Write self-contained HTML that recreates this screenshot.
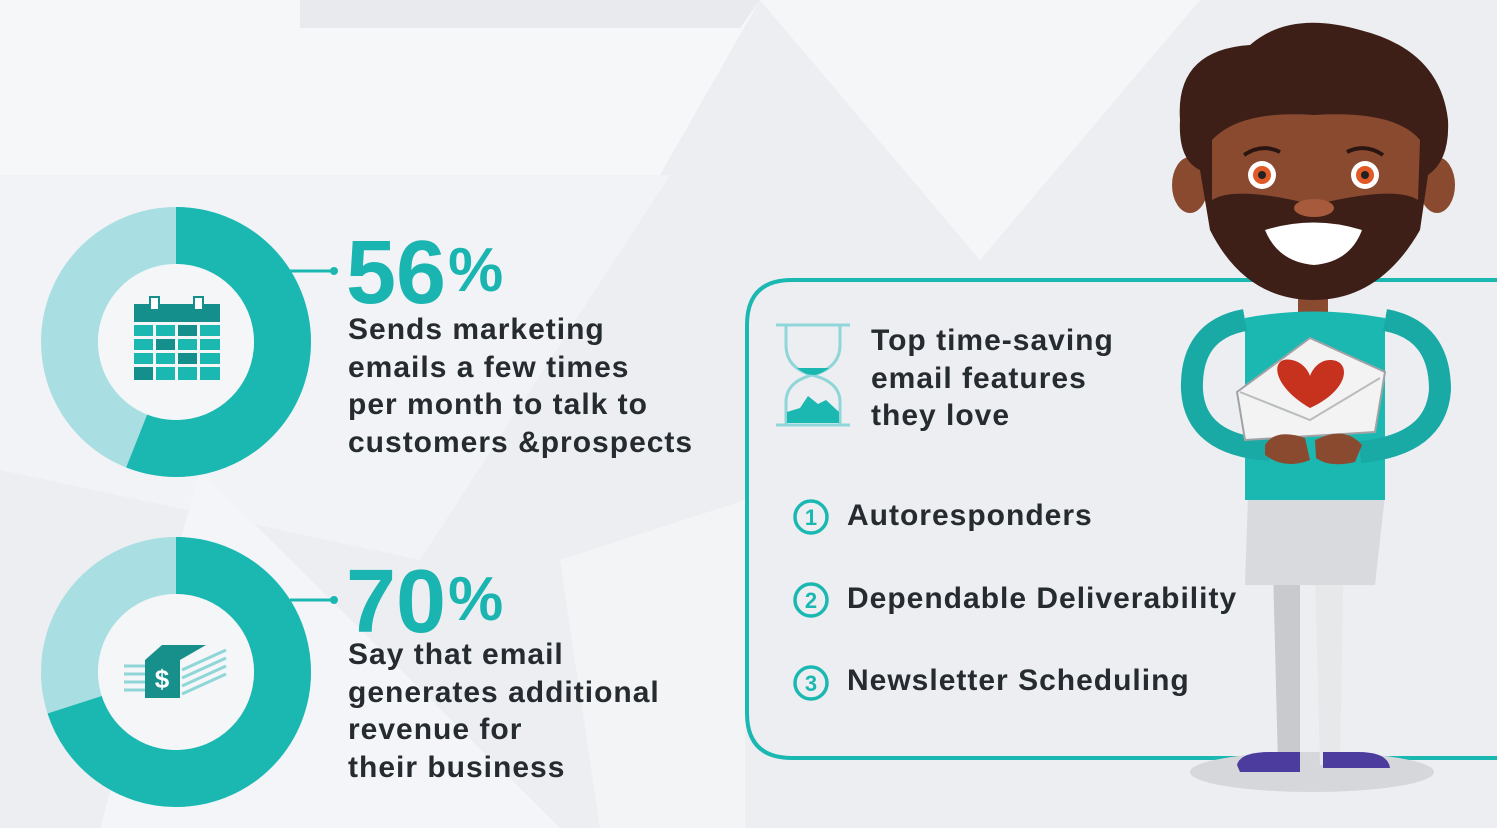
<!DOCTYPE html>
<html><head><meta charset="utf-8"><style>
body{margin:0;width:1497px;height:828px;overflow:hidden;background:#eef0f3;font-family:"Liberation Sans",sans-serif;}
.t{position:absolute;color:#262b30;font-weight:bold;font-size:30px;line-height:37.5px;letter-spacing:1px}
.big{position:absolute;color:#1ab5b0;font-weight:bold;font-size:90px;line-height:82px;letter-spacing:0px}
.big span{font-size:62px;vertical-align:top;position:relative;top:-2px;margin-left:2px}
</style></head><body>
<svg width="1497" height="828" style="position:absolute;left:0;top:0">
<polygon points="0,0 1497,0 1497,828 0,828" fill="#eceef2"/>
<polygon points="0,0 760,0 660,175 0,175" fill="#f6f7f9"/>
<polygon points="0,175 670,175 420,560 0,470" fill="#f1f3f6"/>
<polygon points="760,0 1200,0 980,260" fill="#f5f6f8"/>
<polygon points="200,470 560,828 100,828" fill="#f4f5f8"/>
<polygon points="300,0 760,0 740,28 300,28" fill="#e8eaee"/>
<polygon points="560,560 745,500 745,828 600,828" fill="#f2f4f6"/>
<circle cx="176" cy="342" r="106.5" fill="none" stroke="#a9dfe2" stroke-width="57"/>
<circle cx="176" cy="342" r="106.5" fill="none" stroke="#1bb8b2" stroke-width="57" stroke-dasharray="374.7 1000" transform="rotate(-90 176 342)"/>
<circle cx="176" cy="342" r="78" fill="#f4f6f8"/>
<circle cx="176" cy="672" r="106.5" fill="none" stroke="#a9dfe2" stroke-width="57"/>
<circle cx="176" cy="672" r="106.5" fill="none" stroke="#1bb8b2" stroke-width="57" stroke-dasharray="468.4 1000" transform="rotate(-90 176 672)"/>
<circle cx="176" cy="672" r="78" fill="#f4f6f8"/>
<line x1="290" y1="271" x2="335" y2="271" stroke="#1bb8b2" stroke-width="3"/>
<circle cx="334" cy="271" r="4" fill="#1bb8b2"/>
<line x1="290" y1="600" x2="335" y2="600" stroke="#1bb8b2" stroke-width="3"/>
<circle cx="334" cy="600" r="4" fill="#1bb8b2"/>
<rect x="134" y="304" width="86" height="18" fill="#148f8b"/>
<rect x="150" y="297" width="9" height="13" fill="#fff" stroke="#148f8b" stroke-width="2"/>
<rect x="194" y="297" width="9" height="13" fill="#fff" stroke="#148f8b" stroke-width="2"/>
<g fill="#1bb8b2">
<rect x="134" y="325" width="19" height="11"/><rect x="156" y="325" width="19" height="11"/><rect x="178" y="325" width="19" height="11" fill="#148f8b"/><rect x="200" y="325" width="20" height="11"/>
<rect x="134" y="339" width="19" height="11"/><rect x="156" y="339" width="19" height="11" fill="#148f8b"/><rect x="178" y="339" width="19" height="11"/><rect x="200" y="339" width="20" height="11"/>
<rect x="134" y="353" width="19" height="11"/><rect x="156" y="353" width="19" height="11"/><rect x="178" y="353" width="19" height="11" fill="#148f8b"/><rect x="200" y="353" width="20" height="11"/>
<rect x="134" y="367" width="19" height="13" fill="#148f8b"/><rect x="156" y="367" width="19" height="13"/><rect x="178" y="367" width="19" height="13"/><rect x="200" y="367" width="20" height="13"/>
</g>
<g stroke="#8fd6d8" stroke-width="3">
<line x1="124" y1="666" x2="146" y2="666"/><line x1="124" y1="674" x2="146" y2="674"/><line x1="124" y1="682" x2="146" y2="682"/><line x1="124" y1="690" x2="146" y2="690"/>
<line x1="182" y1="670" x2="226" y2="650"/><line x1="182" y1="678" x2="226" y2="658"/><line x1="182" y1="686" x2="226" y2="666"/><line x1="182" y1="694" x2="226" y2="674"/>
</g>
<polygon points="145,660 162,645 206,645 180,660 180,698 145,698" fill="#178f8b"/>
<text x="162" y="688" font-size="26" font-weight="bold" fill="#fff" text-anchor="middle" font-family="Liberation Sans">$</text>
<path d="M1500,280 H792 Q747,280 747,325 V713 Q747,758 792,758 H1500" fill="none" stroke="#1bb8b2" stroke-width="4"/>
<g stroke="#8fd6d8" stroke-width="3" fill="none">
<line x1="776" y1="325" x2="850" y2="325"/><line x1="776" y1="425" x2="850" y2="425"/>
<path d="M786,326 V345 Q786,368 812,375 Q840,368 840,345 V326"/>
<path d="M786,424 V402 Q786,382 812,375 Q840,382 840,402 V424"/>
</g>
<path d="M797,368 H829 Q820,375 813,375 Q805,375 797,368Z" fill="#1bb8b2"/>
<path d="M787,412 L800,408 L808,396 L818,404 L826,400 L839,412 V423 H787Z" fill="#1bb8b2"/>
<g fill="none" stroke="#1bb8b2" stroke-width="3.5"><circle cx="811" cy="517" r="16"/><circle cx="811" cy="600" r="16"/><circle cx="811" cy="683" r="16"/></g>
<g fill="#1bb8b2" font-family="Liberation Sans" font-weight="bold" font-size="22" text-anchor="middle"><text x="811" y="525">1</text><text x="811" y="608">2</text><text x="811" y="691">3</text></g>
<ellipse cx="1312" cy="772" rx="122" ry="20" fill="#d6d7da"/>
<path d="M1270,450 H1300 V765 H1278 Z" fill="#c9cacd"/>
<path d="M1300,480 H1345 L1340,765 H1320 L1315,575 H1300Z" fill="#e7e8ea"/>
<path d="M1248,495 H1385 L1375,585 H1245Z" fill="#d9dadd"/>
<path d="M1237,765 Q1240,752 1270,752 H1300 V772 H1240Z" fill="#4b3c9e"/>
<path d="M1323,752 H1358 Q1388,752 1390,768 H1323Z" fill="#4b3c9e"/>
<rect x="1298" y="285" width="30" height="35" fill="#8a4a30"/>
<path d="M1245,318 Q1314,305 1385,318 L1385,500 H1245Z" fill="#1bb8b2"/>
<path d="M1245,320 Q1190,330 1192,390 Q1195,445 1270,450" fill="none" stroke="#19aaa5" stroke-width="22"/>
<path d="M1385,320 Q1440,330 1440,390 Q1436,445 1360,452" fill="none" stroke="#19aaa5" stroke-width="22"/>
<path d="M1237,392 L1310,338 L1385,372 L1375,432 L1245,440Z" fill="#f3f3f3" stroke="#9fa3a6" stroke-width="2"/>
<path d="M1310,408 C1270,385 1270,355 1292,360 C1302,362 1308,370 1310,376 C1313,368 1320,360 1330,360 C1352,360 1350,390 1310,408Z" fill="#c7321f"/>
<path d="M1240,392 L1310,420 L1380,378" fill="none" stroke="#b9bcbe" stroke-width="2"/>
<path d="M1265,445 Q1275,428 1305,438 L1310,460 Q1285,470 1265,455Z" fill="#8a4a30"/>
<path d="M1315,440 Q1345,425 1362,445 L1355,462 Q1330,468 1316,458Z" fill="#8a4a30"/>
<ellipse cx="1190" cy="185" rx="18" ry="28" fill="#8a4a30"/>
<ellipse cx="1437" cy="185" rx="18" ry="28" fill="#8a4a30"/>
<path d="M1180,120 Q1175,50 1250,45 Q1290,10 1360,30 Q1440,50 1448,120 Q1450,160 1428,175 L1420,230 Q1380,300 1314,300 Q1245,300 1210,230 L1200,170 Q1178,160 1180,120Z" fill="#3d1f18"/>
<path d="M1212,140 Q1240,110 1314,115 Q1395,110 1420,140 L1418,200 Q1395,185 1314,205 Q1235,185 1212,200Z" fill="#8a4a30"/>
<path d="M1265,230 Q1314,215 1362,230 Q1350,262 1314,265 Q1278,262 1265,230Z" fill="#fff"/>
<ellipse cx="1314" cy="208" rx="20" ry="9" fill="#a85a3d"/>
<circle cx="1262" cy="175" r="14" fill="#fff"/><circle cx="1262" cy="175" r="9" fill="#e05a28"/><circle cx="1262" cy="175" r="4" fill="#222"/>
<circle cx="1365" cy="175" r="14" fill="#fff"/><circle cx="1365" cy="175" r="9" fill="#e05a28"/><circle cx="1365" cy="175" r="4" fill="#222"/>
<path d="M1244,155 Q1262,143 1280,152" stroke="#2a1510" stroke-width="4" fill="none"/>
<path d="M1347,152 Q1365,143 1383,155" stroke="#2a1510" stroke-width="4" fill="none"/>
</svg>
<div class="big" style="left:346px;top:232px">56<span>%</span></div>
<div class="t" style="left:348px;top:311px">Sends marketing<br>emails a few times<br>per month to talk to<br>customers &amp;prospects</div>
<div class="big" style="left:346px;top:561px">70<span>%</span></div>
<div class="t" style="left:348px;top:636px">Say that email<br>generates additional<br>revenue for<br>their business</div>
<div class="t" style="left:871px;top:322px">Top time-saving<br>email features<br>they love</div>
<div class="t" style="left:847px;top:497px">Autoresponders</div>
<div class="t" style="left:847px;top:580px">Dependable Deliverability</div>
<div class="t" style="left:847px;top:662px">Newsletter Scheduling</div>
</body></html>
